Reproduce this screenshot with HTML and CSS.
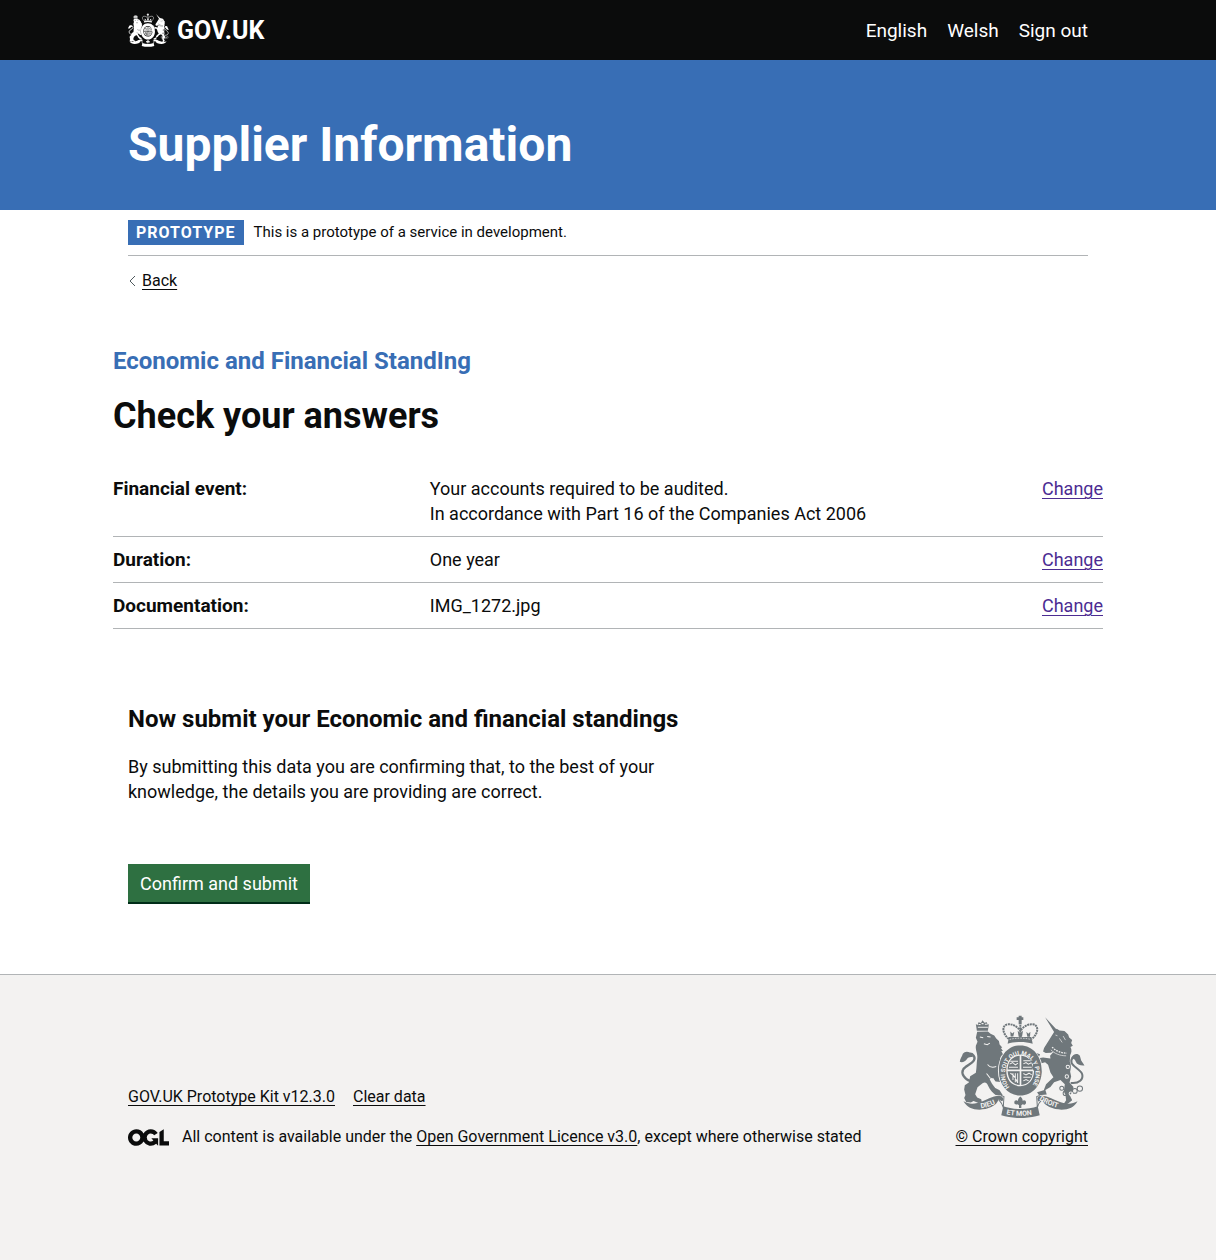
FILE: index.html
```html
<!DOCTYPE html>
<html lang="en">
<head>
<meta charset="utf-8">
<meta name="viewport" content="width=device-width, initial-scale=1">
<title>Check your answers - Supplier Information - GOV.UK</title>
<link rel="stylesheet" href="styles.css">
</head>
<body>
<svg class="sprite" aria-hidden="true">
  <defs>
    <symbol id="arms" viewBox="30 28 376 308">
      <!-- lion -->
      <path fill="currentColor" fill-rule="evenodd" d="M83 75L80 55l5 4 3-9 7 2 5-8 6 7 7-1 2 8 4-3-3 20zM86 66h30v-3H86zM88 58h6v-3h-6zM97 56h6v-4h-6zM107 57h6v-3h-6z"/>
      <path fill="currentColor" d="M84 78l32-1 8 7 11 5 6 9 8 8 2 10 8 9-4 2 6 9-5 0 5 9c-6 5-8 10-9 15l8 0 7 8-5 12-12 0c4 9 4 19-1 28l8 10-3 10-15-1-6-8-12 0c3 9 10 19 17 27l13 7 10 16-22-2c-8-7-17-15-22-27-5-10-9-12-17-8l-15 12-7 21 6 10 12 5 2 9-10 2-15-6-8 5-14-2-6-12 4-9-4-16 2-13 12-8 4-19 17-10c3-18 2-30 4-41 3-15-6-26-4-40l5-12-5-12z"/>
      <path class="crest-cut" fill="none" stroke-width="3" d="M92 94l10 2M114 92l10 2M104 114l10 3 8-5M115 176c5 7 15 10 26 6M112 203l10 13 12 4"/>
      <path fill="none" stroke="currentColor" stroke-width="7" stroke-linecap="round" d="M62 225c-15-4-27-22-20-34 6-11 26-16 32-27 6-10-3-22-14-20-9 2-9 12-18 17"/>
      <path fill="currentColor" d="M72 154c-6-16-22-22-31-10-2 9-8 13-9 24 7 4 17-1 22-9 3-5 9-7 18-5z"/>
      <!-- unicorn -->
      <path fill="currentColor" d="M287 35l35 37-8 7zM313 80l9-11 8 5 15 2 11 10 3 9 9 8-3 9 5 8-7 4c5 9 3 18-1 24l-1 20c5 10 3 20 1 30l3 14-5 18 12 13-3 15-8 10 7 15-12 10-18 8 12-18-2-16-5-10 3-22-13-13-19 7-11 14-15 9 4 14-23 2-6-9 20-6 7-18 22-21-9-14-7-23-9-8-13 4-11 8 2 13 14 4-6 8-16-5-9-15 4-12-11-6-3-9 12-6 8-12 14 4-5 12 14-2 22 3-1-8 11-13-9 4-15 1-8-5 3-10z"/>
      <path class="crest-cut" fill="none" stroke-width="4" stroke-dasharray="5 3" d="M308 124c12 12 26 18 44 18"/>
      <path class="crest-cut" fill="none" stroke-width="2" d="M304 132c12 12 28 18 46 18M318 88l6 2M330 98l8 12M341 91l7 12"/>
      <path fill="none" stroke="currentColor" stroke-width="6" stroke-linecap="round" d="M366 231c23 2 36-11 32-26-4-15-29-22-32-35-3-12 10-22 19-13"/>
      <path fill="currentColor" d="M364 158c7-14 20-17 27-8l4 14 10 15c-12 1-23-2-26-11-3-8-8-12-15-10z"/>
      <g fill="none" stroke="currentColor" stroke-width="3"><circle cx="337" cy="247" r="6"/><circle cx="348" cy="262" r="7"/><circle cx="376" cy="255" r="7"/><circle cx="391" cy="248" r="8"/><circle cx="295" cy="128" r="7"/></g>
      <g class="crest-cut" fill="none" stroke-width="3"><circle cx="355" cy="183" r="5"/><circle cx="352" cy="212" r="5"/><circle cx="364" cy="263" r="5"/></g>
      <!-- royal crown -->
      <path fill="currentColor" d="M208 30h9v5h5v8h-5v13h-9V43h-6v-8h6zM179 94h67l4 20c-22-7-53-7-75 0z"/>
      <path fill="none" stroke="currentColor" stroke-width="6" stroke-dasharray="6 2" d="M179 100c-22-18-21-42-4-44 18-2 31 9 38 20 7-11 20-22 38-20 17 2 18 26-4 44M213 57v38"/>
      <path fill="currentColor" d="M183 77l6 6 6-5-3 14h-8zM231 78l6 6 6-6-1 15h-8zM205 75l8 7 8-7-3 18h-10z"/>
      <path class="crest-cut" fill="none" stroke-width="2" stroke-dasharray="5 3" d="M181 101c20-5 43-5 64 0"/>
      <!-- garter and shield -->
      <ellipse class="crest-cut" cx="213" cy="195" rx="65" ry="76" fill="none" stroke-width="4"/>
      <path fill="currentColor" fill-rule="evenodd" d="M213 119c38 0 64 32 64 76s-28 74-64 74-64-30-64-74 26-76 64-76zm0 27c-27 0-42 21-42 49s17 46 42 46 41-20 41-46-15-49-41-49z"/>
      <path fill="currentColor" d="M211 150v41h-36c1-25 14-39 36-41zm5 0c22 2 33 16 34 41h-34zm-41 46h36v41c-22-1-34-16-36-41zm41 0h34c0 24-13 39-34 41z"/>
      <g class="crest-cut" fill="none"><path stroke-width="3" d="M183 166h23M181 175l9-5 8 7 8-5M179 184h27M222 165h22M222 174l8-4 7 5 9-4M221 184h26M222 203l8 4 9-5 8 5M222 214h22M222 225l8-4 8 4M183 202c13 5 15 15 22 29M191 202v20M198 202v27M205 202v29"/></g>
      <!-- motto scroll -->
      <path fill="currentColor" d="M43 286c19 11 37 8 57 0 22-9 39-19 53-16 11 3 10 14 5 16l-10-5c-6 20-33 30-57 30-22 0-38-7-48-25zM384 286c-19 11-38 8-58 0-23-9-39-19-54-16-11 3-8 14-4 17l10-6c6 20 34 30 58 30 22 0 39-7 48-25z"/>
      <path fill="none" stroke="currentColor" stroke-width="3" d="M148 281c7 7 12 14 14 24l2-33-9-3M278 281c-8 7-12 14-14 24l-2-33 9-3"/>
      <path fill="currentColor" d="M162 301c30 11 73 11 103 0l6 27c-35 11-80 11-115 0zM213 272c9 7 8 15 3 18 4-10 15-9 14 1-1 6-7 6-10 4l-4 3v8h-7v-8l-4-3c-4 2-10 1-10-5 0-9 10-10 14 0-5-4-4-12 4-18z"/>
    </symbol>
  </defs>
</svg>

<header class="header">
  <div class="container header-inner">
    <a class="logo" href="#"><svg class="logo-crest" aria-hidden="true"><use href="#arms"/></svg><span>GOV.UK</span></a>
    <nav class="header-nav" aria-label="Menu">
      <a href="#">English</a>
      <a href="#">Welsh</a>
      <a href="#">Sign out</a>
    </nav>
  </div>
</header>

<div class="masthead">
  <div class="container masthead-title">Supplier Information</div>
</div>

<div class="container">
  <div class="phase-banner"><strong class="tag">PROTOTYPE</strong><span>This is a prototype of a service in development.</span></div>
  <a class="back-link" href="#"><svg viewBox="0 0 8 12" aria-hidden="true"><path d="M7 1L2 6l5 5" fill="none" stroke="currentColor"/></svg><span>Back</span></a>

  <main class="main">
    <div class="answers">
      <h2 class="section-name">Economic and Financial StandIng</h2>
      <h1 class="page-title">Check your answers</h1>
      <dl class="summary">
        <div class="summary-row">
          <dt>Financial event:</dt>
          <dd>Your accounts required to be audited.<br>In accordance with Part 16 of the Companies Act 2006</dd>
          <dd class="action"><a href="#" aria-label="Change financial event">Change</a></dd>
        </div>
        <div class="summary-row">
          <dt>Duration:</dt>
          <dd>One year</dd>
          <dd class="action"><a href="#" aria-label="Change duration">Change</a></dd>
        </div>
        <div class="summary-row">
          <dt>Documentation:</dt>
          <dd>IMG_1272.jpg</dd>
          <dd class="action"><a href="#" aria-label="Change documentation">Change</a></dd>
        </div>
      </dl>
    </div>

    <form class="submit">
      <h2 class="submit-title">Now submit your Economic and financial standings</h2>
      <p>By submitting this data you are confirming that, to the best of your knowledge, the details you are providing are correct.</p>
      <button class="button" type="button">Confirm and submit</button>
    </form>
  </main>
</div>

<footer class="footer">
  <div class="container footer-inner">
    <div class="footer-meta">
      <div class="footer-links"><a href="#">GOV.UK Prototype Kit v12.3.0</a><a href="#">Clear data</a></div>
      <div class="licence">
        <svg class="ogl" viewBox="0 0 483.2 195.7" role="img" aria-label="Open Government Licence"><path fill="currentColor" d="M421.5 142.8V.1l-50.7 32.3v161.1h112.4v-50.7zm-122.3-9.6A47.12 47.12 0 0 1 221 97.8c0-26 21.1-47.1 47.1-47.1 16.7 0 31.4 8.7 39.7 21.8l42.7-27.2A97.63 97.63 0 0 0 268.1 0c-36.5 0-68.3 20.1-85.1 49.7A98 98 0 0 0 97.8 0C43.9 0 0 43.9 0 97.8s43.9 97.8 97.8 97.8c36.5 0 68.3-20.1 85.1-49.7a97.76 97.76 0 0 0 149.6 25.4l19.4 22.2h3v-87.8h-80l24.3 27.5zM97.8 145c-26 0-47.1-21.1-47.1-47.1s21.1-47.1 47.1-47.1 47.1 21.1 47.1 47.1S123.8 145 97.8 145"/></svg>
        <span>All content is available under the <a href="#">Open Government Licence v3.0</a>, except where otherwise stated</span>
      </div>
    </div>
    <a class="copyright" href="#">
      <svg class="copyright-crest" viewBox="30 28 376 308" aria-hidden="true">
        <defs>
          <path id="garter" d="M181 244a46 56 0 1 1 64 0"/>
          <path id="motto-left" d="M95 307q33-4 60-23"/>
          <path id="motto-mid" d="M171 325q42 9 90 0"/>
          <path id="motto-right" d="M269 281q31 20 68 27"/>
        </defs>
        <use href="#arms" x="30" y="28" width="376" height="308"/>
        <g class="motto">
          <text class="motto-garter"><textPath href="#garter">HONI SOIT QUI MAL Y PENSE</textPath></text>
          <text><textPath href="#motto-left">DIEU</textPath></text>
          <text><textPath href="#motto-mid">ET MON</textPath></text>
          <text><textPath href="#motto-right">DROIT</textPath></text>
        </g>
      </svg>
      <span>© Crown copyright</span>
    </a>
  </div>
</footer>
</body>
</html>
```
FILE: styles.css
```css
* { box-sizing: border-box; }
body {
  margin: 0;
  background: #fff;
  color: #0b0c0c;
  font: 18px/25px Roboto, "Liberation Sans", sans-serif;
}
h1, h2, p, dl, dd { margin: 0; }
a {
  color: inherit;
  text-decoration-thickness: 1px;
  text-underline-offset: 3px;
}
.sprite { position: absolute; width: 0; height: 0; }
.container { max-width: 960px; margin: 0 auto; }

.header { background: #0b0c0c; color: #fff; }
.header-inner {
  display: flex;
  justify-content: space-between;
  align-items: center;
  min-height: 60px;
}
.header a { text-decoration: none; }
.logo {
  display: flex;
  align-items: center;
  gap: 8px;
  font-size: 25px;
  font-weight: 700;
}
.logo-crest { width: 41px; height: 34px; --crest-cut: #0b0c0c; }
.header-nav { display: flex; gap: 20px; font-size: 19px; }
.crest-cut { stroke: var(--crest-cut); }

.masthead { padding: 60px 0 40px; background: #386eb5; color: #fff; }
.masthead-title { font-size: 48px; line-height: 50px; font-weight: 700; }

.phase-banner {
  display: flex;
  align-items: center;
  gap: 10px;
  padding: 10px 0;
  border-bottom: 1px solid #b1b4b6;
  font-size: 15px;
}
.tag {
  padding: 0 8px;
  background: #386eb5;
  color: #fff;
  font-size: 16px;
  letter-spacing: 1px;
}
.back-link {
  display: flex;
  width: fit-content;
  align-items: center;
  gap: 6px;
  margin-top: 15px;
  text-decoration: none;
  font-size: 16px;
  line-height: 20px;
}
.back-link svg { width: 8px; height: 12px; color: #505a5f; }
.back-link span { text-decoration: underline 1px; text-underline-offset: 3px; }

.main { padding: 55px 0 70px; }
.answers { margin: 0 -15px; }
.section-name { color: #386eb5; font-size: 24px; line-height: 30px; }
.page-title { margin: 20px 0 30px; font-size: 36px; line-height: 40px; }
.summary-row {
  display: grid;
  grid-template-columns: 32% 1fr auto;
  padding: 10px 0;
  border-bottom: 1px solid #b1b4b6;
}
.summary dt { font-size: 19px; font-weight: 700; }
.action { color: #4c2c92; }

.submit { max-width: 560px; margin-top: 75px; }
.submit-title { margin-bottom: 20px; font-size: 24px; line-height: 30px; }
.button {
  display: block;
  margin-top: 60px;
  padding: 7px 12px 6px;
  border: 0;
  border-bottom: 2px solid #002d18;
  background: #2e7041;
  color: #fff;
  font: inherit;
}

.footer {
  min-height: 286px;
  padding: 40px 0;
  border-top: 1px solid #b1b4b6;
  background: #f3f2f1;
  font-size: 16px;
  line-height: 20px;
}
.footer-inner {
  display: flex;
  justify-content: space-between;
  align-items: flex-end;
}
.footer-links { display: flex; gap: 18px; margin-bottom: 20px; }
.licence { display: flex; align-items: center; gap: 13px; }
.ogl { width: 41px; height: 17px; }
.copyright {
  display: flex;
  flex-direction: column;
  align-items: center;
  gap: 9px;
}
.copyright-crest {
  width: 126px;
  height: 103px;
  color: #6f777b;
  --crest-cut: #f3f2f1;
}
.motto { fill: #f3f2f1; font-size: 21px; font-weight: 700; }
.motto-garter { font-size: 18px; }
```
